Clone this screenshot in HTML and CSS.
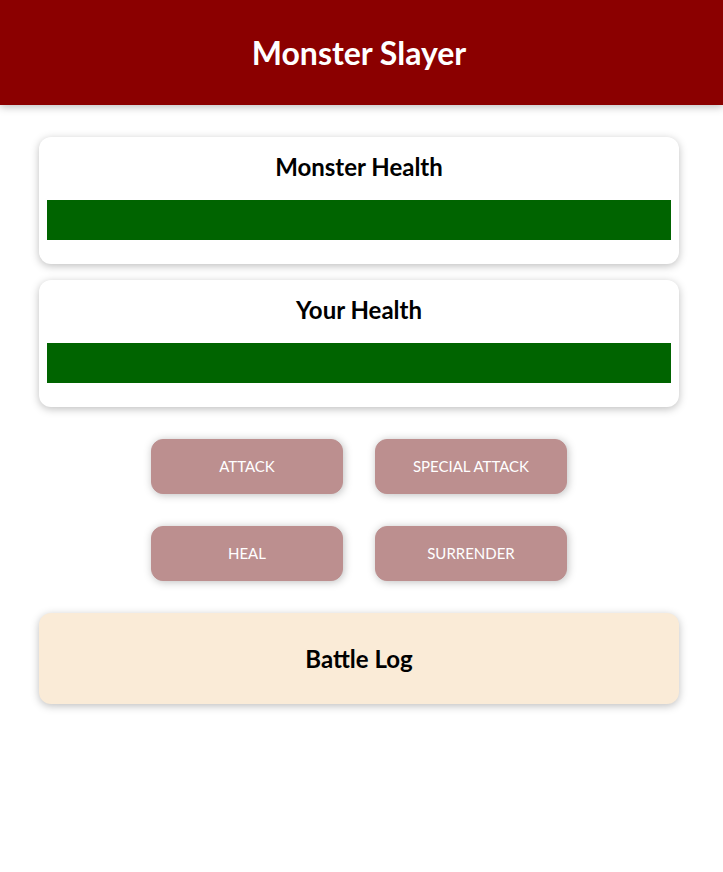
FILE: index.html
```html
<!DOCTYPE html>
<html lang="en">
<head>
<meta charset="utf-8">
<title>Monster Slayer</title>
<link rel="stylesheet" href="styles.css">
</head>
<body>
<header class="site-header">
  <h1 class="site-title">Monster Slayer</h1>
</header>
<main class="game">
  <section class="card">
    <h2 class="card-title">Monster Health</h2>
    <div class="healthbar"><div class="healthbar-value" style="width: 100%"></div></div>
  </section>
  <section class="card">
    <h2 class="card-title">Your Health</h2>
    <div class="healthbar"><div class="healthbar-value" style="width: 100%"></div></div>
  </section>
  <section class="controls">
    <button class="action">ATTACK</button>
    <button class="action">SPECIAL ATTACK</button>
    <button class="action">HEAL</button>
    <button class="action">SURRENDER</button>
  </section>
  <section class="card log">
    <h2 class="log-title">Battle Log</h2>
    <ul class="log-list"></ul>
  </section>
</main>
</body>
</html>
```

FILE: styles.css
```css
* { box-sizing: border-box; }

html {
  font-family: "Lato", "Open Sans", sans-serif;
}

body {
  margin: 0;
  padding-right: 5px;
  background: #ffffff;
}

.site-header {
  margin: 0 -5px 32px 0;
  padding: 8px 5px 8px 0;
  background-color: #8b0000;
  color: #ffffff;
  text-align: center;
  box-shadow: 0 2px 8px rgba(0, 0, 0, 0.26);
}

.site-title {
  margin: 21px 0;
  font-size: 32px;
  line-height: 47px;
  font-weight: 700;
}

.game {
  width: 640px;
  margin: 0 auto;
  padding-bottom: 24px;
  display: flex;
  flex-direction: column;
  gap: 16px;
}

.card {
  text-align: center;
  padding: 8px;
  border-radius: 12px;
  box-shadow: 0 2px 8px rgba(0, 0, 0, 0.26);
  background: #ffffff;
}

.card-title {
  margin: 4px 0 16px;
  font-size: 24px;
  line-height: 35px;
  font-weight: 700;
  color: #000000;
}

.healthbar {
  width: 100%;
  height: 40px;
  margin-bottom: 16px;
}

.healthbar-value {
  height: 100%;
  background-color: #006400;
}

.controls {
  display: grid;
  grid-template-columns: repeat(2, 192px);
  column-gap: 32px;
  row-gap: 32px;
  justify-content: center;
  padding: 16px 0;
}

.action {
  font: inherit;
  font-size: 15px;
  line-height: 23px;
  height: 55px;
  border: 1px solid #bc8f8f;
  background-color: #bc8f8f;
  color: #ffffff;
  padding: 15px 8px;
  border-radius: 12px;
  box-shadow: 1px 1px 8px rgba(0, 0, 0, 0.26);
  cursor: pointer;
}

.log {
  background-color: #faebd7;
}

.log-title {
  margin: 20px 0;
  font-size: 24px;
  line-height: 35px;
  font-weight: 700;
  color: #000000;
}

.log-list {
  list-style: none;
  margin: 0;
  padding: 0;
}
```
